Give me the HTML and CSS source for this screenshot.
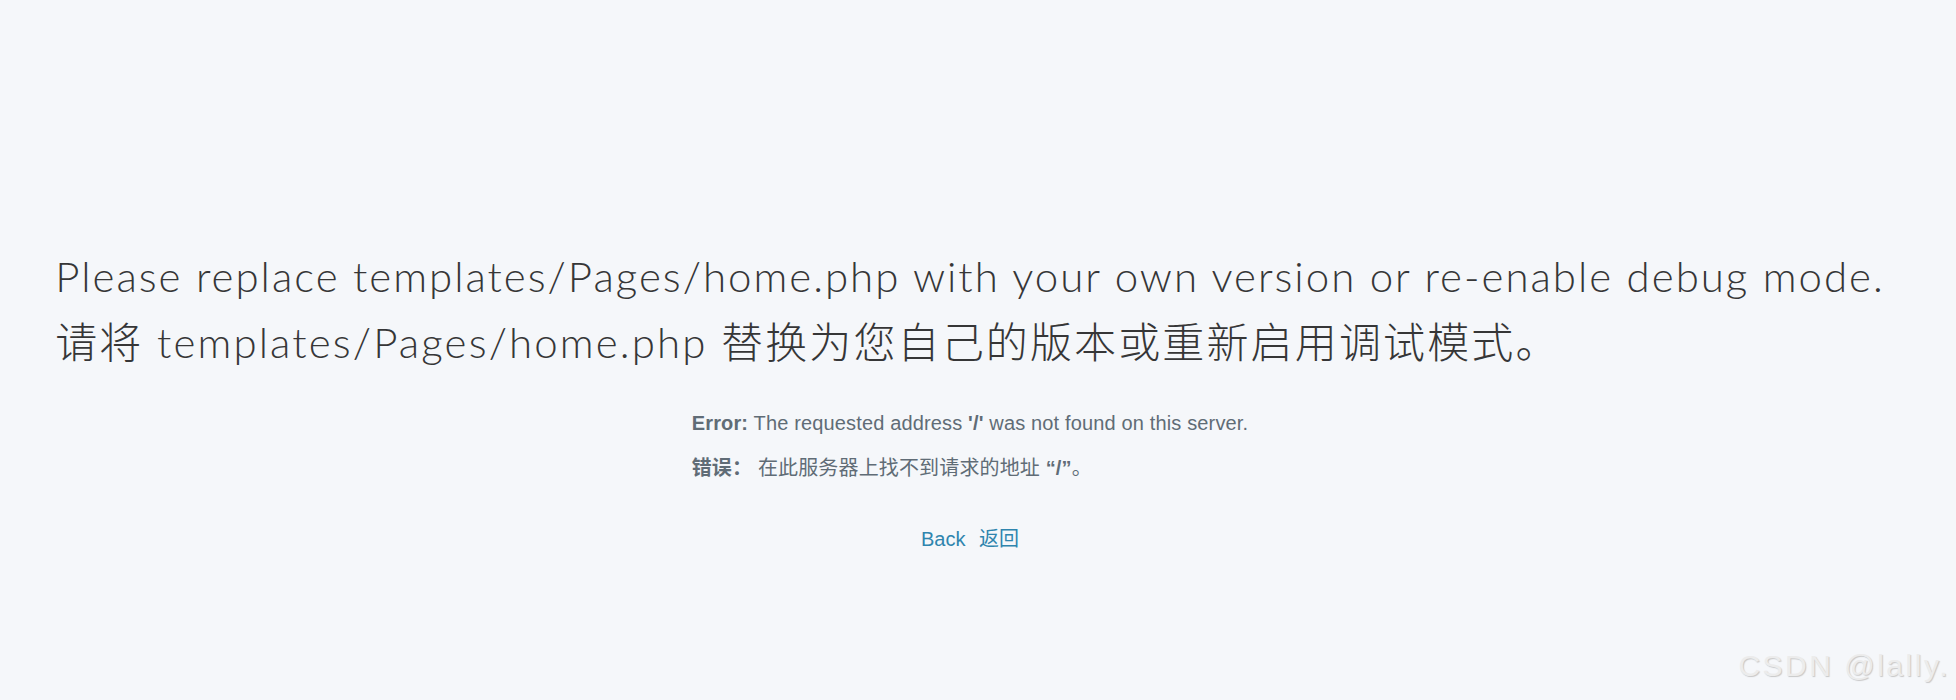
FILE: index.html
```html
<!DOCTYPE html>
<html lang="en">
<head>
<meta charset="utf-8">
<title>Error</title>
<link rel="stylesheet" href="styles.css">
</head>
<body>
<main class="page">
  <h2 class="title">
    <span class="title-line">Please replace templates/Pages/home.php with your own version or re-enable debug mode.</span>
    <span class="title-line title-zh">请将 templates/Pages/home.php 替换为您自己的版本或重新启用调试模式。</span>
  </h2>
  <div class="error-box">
    <p class="error"><strong>Error:</strong> The requested address <strong>'/'</strong> was not found on this server.</p>
    <p class="error"><strong>错误：</strong> 在此服务器上找不到请求的地址 <strong>“/”</strong>。</p>
  </div>
  <p class="back"><a href="#">Back</a> <a href="#">返回</a></p>
</main>
<div class="watermark">CSDN @lally.</div>
</body>
</html>
```

FILE: styles.css
```css
html, body {
  margin: 0;
  padding: 0;
}
body {
  background: #f5f7fa;
  width: 1956px;
  height: 700px;
  overflow: hidden;
  position: relative;
  font-family: "Liberation Sans", Arial, "Noto Sans CJK SC", sans-serif;
}
.page {
  display: flex;
  flex-direction: column;
  align-items: center;
  padding-top: 246px;
  padding-right: 16px;
}
.title {
  margin: 0;
  font-family: Lato, "Noto Sans CJK SC", sans-serif;
  font-weight: 300;
  font-size: 42px;
  line-height: 60px;
  letter-spacing: 2px;
  color: #363637;
  text-align: left;
  white-space: nowrap;
}
.title-line {
  display: block;
}
.title-zh {
  margin-top: 6px;
  letter-spacing: 2.13px;
}
.error-box {
  margin-top: 41px;
  white-space: nowrap;
}
.error {
  margin: 0 0 25px;
  font-size: 20px;
  line-height: 20px;
  letter-spacing: 0.15px;
  color: #606c76;
}
.error:last-child {
  margin-bottom: 0;
}
.error strong {
  font-weight: bold;
}
.back {
  margin: 51px 0 0;
  font-size: 20px;
  line-height: 20px;
}
.back a {
  color: #2f85ae;
  text-decoration: none;
  margin: 0 4px;
}
.watermark {
  position: absolute;
  right: 6px;
  bottom: 17px;
  font-size: 30px;
  letter-spacing: 2.5px;
  color: #ececec;
  text-shadow: 1px 1px 1px #c8c8c8;
}
```
